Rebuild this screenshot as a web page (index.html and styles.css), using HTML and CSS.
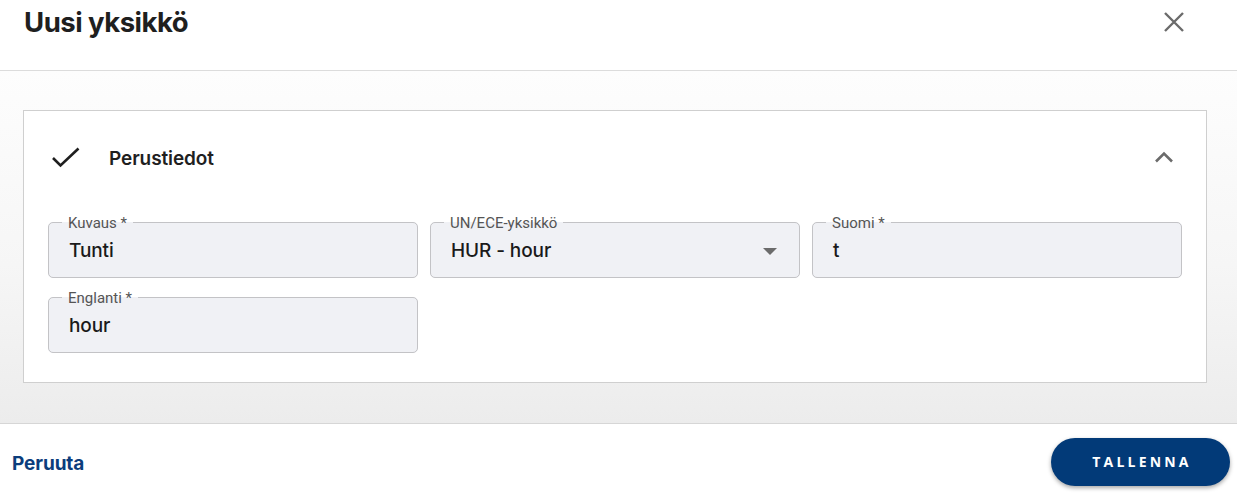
FILE: index.html
```html
<!DOCTYPE html>
<html lang="fi">
<head>
<meta charset="utf-8">
<title>Uusi yksikkö</title>
<link rel="stylesheet" href="styles.css">
</head>
<body>
<div class="dialog">
  <header class="dlg-header">
    <h1 class="dlg-title">Uusi yksikkö</h1>
    <button class="close-btn" aria-label="Sulje">
      <svg width="22" height="22" viewBox="0 0 22 22"><path d="M2 2 L20 20 M20 2 L2 20" stroke="#6b6b6b" stroke-width="2.4" fill="none"/></svg>
    </button>
  </header>
  <main class="dlg-content">
    <section class="card">
      <div class="card-head">
        <svg class="check" width="30" height="22" viewBox="0 0 30 22"><polyline points="2,11 9.5,18.5 27.5,1.5" stroke="#1f1f1f" stroke-width="2.6" fill="none"/></svg>
        <span class="card-title">Perustiedot</span>
        <svg class="chevron" width="20" height="12" viewBox="0 0 20 12"><polyline points="2,10.5 10,2.5 18,10.5" stroke="#6b6b6b" stroke-width="2.6" fill="none"/></svg>
      </div>
      <div class="fields">
        <fieldset class="field">
          <legend>Kuvaus *</legend>
          <div class="value">Tunti</div>
        </fieldset>
        <fieldset class="field">
          <legend>UN/ECE-yksikkö</legend>
          <div class="value select">HUR - hour
            <svg class="caret" width="14" height="7" viewBox="0 0 14 7"><polygon points="0,0 14,0 7,7" fill="#6b6b6b"/></svg>
          </div>
        </fieldset>
        <fieldset class="field">
          <legend>Suomi *</legend>
          <div class="value">t</div>
        </fieldset>
        <fieldset class="field">
          <legend>Englanti *</legend>
          <div class="value">hour</div>
        </fieldset>
      </div>
    </section>
  </main>
  <footer class="dlg-footer">
    <a class="cancel" href="#">Peruuta</a>
    <button class="save">TALLENNA</button>
  </footer>
</div>
</body>
</html>
```

FILE: styles.css
```css
* { box-sizing: border-box; }
html, body { margin: 0; padding: 0; background: #fff; }
body { font-family: "Inter", "Lato", sans-serif; color: #1d1d1d; }

.dialog { width: 1237px; height: 497px; display: flex; flex-direction: column; }

.dlg-header {
  height: 71px;
  border-bottom: 1px solid #dcdcdc;
  display: flex;
  align-items: flex-start;
  justify-content: space-between;
  padding: 4px 52px 0 24px;
}
.dlg-title {
  margin: 0;
  font-family: "Inter", sans-serif;
  font-weight: 700;
  font-size: 27.5px;
  line-height: 36px;
  color: #1f1f1f;
  letter-spacing: -0.5px;
}
.close-btn {
  border: 0; background: none; padding: 0; margin-top: 7px;
  width: 22px; height: 22px; display: flex;
}

.dlg-content {
  flex: 1;
  padding: 39px 30px 40px 23px;
  background: linear-gradient(to bottom, #fdfdfd 0%, #f6f6f6 55%, #ececec 100%);
}

.card {
  background: #fff;
  border: 1px solid #cfcfcf;
  padding: 0 24px 29px 24px;
}
.card-head {
  height: 94px;
  margin-bottom: 11px;
  display: flex;
  align-items: center;
}
.check { margin-left: 3px; margin-right: 28px; }
.card-title {
  font-family: "Inter", sans-serif;
  font-weight: 600;
  font-size: 19px;
  color: #1f1f1f;
  letter-spacing: -0.1px;
  flex: 1;
  padding-top: 2px;
}
.chevron { margin-right: 8px; margin-top: -2px; }

.fields {
  display: grid;
  grid-template-columns: repeat(3, 370px);
  column-gap: 12px;
  row-gap: 13px;
}
.field {
  margin: 0;
  min-width: 0;
  border: 1px solid #c3c3c6;
  border-radius: 5px;
  background: #f0f1f5;
  padding: 0 20px 7px 20px;
}
.field legend {
  font-family: "Roboto", sans-serif;
  font-size: 15px;
  line-height: 14px;
  color: #555;
  padding: 0 6px;
  margin-left: -7px;
}
.value {
  height: 40px;
  line-height: 40px;
  font-family: "Inter", sans-serif;
  font-weight: 500;
  font-size: 19px;
  letter-spacing: -0.1px;
  color: #1a1a1a;
  display: flex;
  align-items: center;
  padding-top: 3px;
}
.value.select { justify-content: space-between; }
.caret { margin-right: 2px; }

.dlg-footer {
  height: 75px;
  border-top: 1px solid #d6d6d6;
  display: flex;
  align-items: center;
  justify-content: space-between;
  padding: 3px 7px 0 12px;
}
.cancel {
  font-family: "Inter", sans-serif;
  font-weight: 700;
  font-size: 19px;
  letter-spacing: -0.1px;
  color: #0b3d7c;
  text-decoration: none;
  margin-top: 4px;
}
.save {
  width: 179px;
  height: 48px;
  border: 0;
  border-radius: 24px;
  background: #023a78;
  color: #fff;
  font-family: "Open Sans", sans-serif;
  font-weight: 700;
  font-size: 14px;
  letter-spacing: 3.2px;
  padding: 0 0 0 3px;
  box-shadow: 0 2px 4px rgba(0,0,0,0.35);
}
```
